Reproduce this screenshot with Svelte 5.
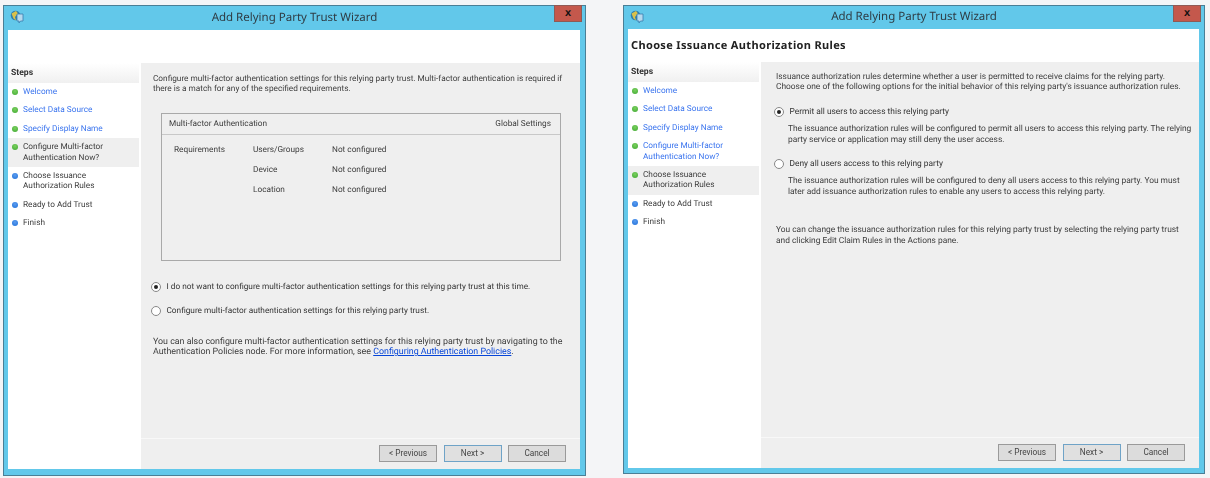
<script>
  const stepsA = [
    { t: ['Welcome'], c: 'g', link: true },
    { t: ['Select Data Source'], c: 'g', link: true },
    { t: ['Specify Display Name'], c: 'g', link: true },
    { t: ['Configure Multi-factor', 'Authentication Now?'], c: 'g', cur: true },
    { t: ['Choose Issuance', 'Authorization Rules'], c: 'b' },
    { t: ['Ready to Add Trust'], c: 'b' },
    { t: ['Finish'], c: 'b' }
  ];
  const stepsB = [
    { t: ['Welcome'], c: 'g', link: true },
    { t: ['Select Data Source'], c: 'g', link: true },
    { t: ['Specify Display Name'], c: 'g', link: true },
    { t: ['Configure Multi-factor', 'Authentication Now?'], c: 'g', link: true },
    { t: ['Choose Issuance', 'Authorization Rules'], c: 'g', cur: true },
    { t: ['Ready to Add Trust'], c: 'b' },
    { t: ['Finish'], c: 'b' }
  ];
  const rows = [
    ['Requirements', 'Users/Groups', 'Not configured'],
    ['', 'Device', 'Not configured'],
    ['', 'Location', 'Not configured']
  ];
</script>

{#snippet titlebar()}
  <div class="titlebar">
    <svg class="appicon" viewBox="0 0 14 14" width="14" height="14">
      <circle cx="5.5" cy="5.5" r="4.8" fill="#2f7fae" />
      <path d="M1.5 3.5 L6 1 L8 3.5 L5 7 L6 10.5 L3.5 8.5 Z" fill="#d8c04a" />
      <path d="M7 4 H13 V11 H10.5 L9 13 V11 H7 Z" fill="#b5d9ee" stroke="#3a7cad" stroke-width="0.8" />
    </svg>
    <span class="wintitle">Add Relying Party Trust Wizard</span>
    <div class="close"><span>x</span></div>
  </div>
{/snippet}

{#snippet stepsPane(steps)}
  <aside class="steps">
    <div class="stepshead">Steps</div>
    <ul>
      {#each steps as s}
        <li class:cur={s.cur}>
          <i class="dot {s.c}"></i>
          <span class:link={s.link}>{#each s.t as line}<span class="line">{line}</span>{/each}</span>
        </li>
      {/each}
    </ul>
  </aside>
{/snippet}

{#snippet footer()}
  <div class="footer">
    <button class="btn">&lt; Previous</button>
    <button class="btn next">Next &gt;</button>
    <button class="btn">Cancel</button>
  </div>
{/snippet}

<div class="page">
  <section class="win one">
    {@render titlebar()}
    <div class="client">
      <header class="head"></header>
      <div class="body">
        {@render stepsPane(stepsA)}
        <main class="main">
          <div class="content">
            <p class="intro">Configure multi-factor authentication settings for this relying party trust. Multi-factor authentication is required if<br />there is a match for any of the specified requirements.</p>
            <div class="mfa">
              <div class="mfahead"><span>Multi-factor Authentication</span><span>Global Settings</span></div>
              <div class="mfagrid">
                {#each rows as r}
                  <span>{r[0]}</span><span>{r[1]}</span><span>{r[2]}</span>
                {/each}
              </div>
            </div>
            <label class="radio first"><i class="rb on"></i>I do not want to configure multi-factor authentication settings for this relying party trust at this time.</label>
            <label class="radio second"><i class="rb"></i>Configure multi-factor authentication settings for this relying party trust.</label>
            <p class="also">You can also configure multi-factor authentication settings for this relying party trust by navigating to the<br />Authentication Policies node. For more information, see <a href="#top">Configuring Authentication Policies</a>.</p>
          </div>
          {@render footer()}
        </main>
      </div>
    </div>
  </section>

  <section class="win two">
    {@render titlebar()}
    <div class="client">
      <header class="head"><h1>Choose Issuance Authorization Rules</h1></header>
      <div class="body">
        {@render stepsPane(stepsB)}
        <main class="main">
          <div class="content">
            <p class="intro">Issuance authorization rules determine whether a user is permitted to receive claims for the relying party.<br />Choose one of the following options for the initial behavior of this relying party's issuance authorization rules.</p>
            <label class="radio p1"><i class="rb on"></i>Permit all users to access this relying party</label>
            <p class="desc">The issuance authorization rules will be configured to permit all users to access this relying party. The relying<br />party service or application may still deny the user access.</p>
            <label class="radio p2"><i class="rb"></i>Deny all users access to this relying party</label>
            <p class="desc">The issuance authorization rules will be configured to deny all users access to this relying party. You must<br />later add issuance authorization rules to enable any users to access this relying party.</p>
            <p class="change">You can change the issuance authorization rules for this relying party trust by selecting the relying party trust<br />and clicking Edit Claim Rules in the Actions pane.</p>
          </div>
          {@render footer()}
        </main>
      </div>
    </div>
  </section>
</div>

<style>
  :global(body) {
    margin: 0;
    background: #f4f5f7;
  }
  .page {
    width: 1210px;
    height: 478px;
    box-sizing: border-box;
    padding: 5px 0 0 3px;
    display: flex;
    align-items: flex-start;
    gap: 37px;
    font-family: Roboto, "Noto Sans", sans-serif;
    font-size: 8.25px;
    line-height: 10.4px;
    color: #3c3c3c;
    text-rendering: geometricPrecision;
    overflow: hidden;
    white-space: nowrap;
    filter: blur(0.35px);
  }
  .win {
    box-sizing: border-box;
    background: #62c8ea;
    border: 1px solid #4a7f96;
    display: flex;
    flex-direction: column;
  }
  .one { width: 583px; height: 471px; }
  .two { width: 582px; height: 469px; }
  .titlebar {
    height: 24px;
    flex: none;
    display: flex;
    align-items: center;
    justify-content: center;
    position: relative;
  }
  .two .titlebar { height: 23px; }
  .appicon { position: absolute; left: 6px; top: 4px; }
  .wintitle { font-size: 11.5px; color: #2f3c44; font-family: "Noto Sans", sans-serif; }
  .close {
    position: absolute;
    right: 3px;
    top: -1px;
    width: 28px;
    height: 17px;
    background: #c4584c;
    border: 1px solid #8f5a55;
    box-sizing: border-box;
    display: flex;
    align-items: center;
    justify-content: center;
    font: bold 11px/1 "Liberation Sans", sans-serif;
    color: #111;
  }
  .client {
    flex: 1;
    margin: 0 5px 6px 4px;
    background: #fff;
    display: flex;
    flex-direction: column;
    min-height: 0;
  }
  .two .client { margin-bottom: 5px; }
  .head {
    height: 33px;
    flex: none;
    box-sizing: border-box;
    padding-top: 2px;
    background: #fff;
    display: flex;
    align-items: center;
  }
  h1 {
    margin: 0 0 0 3px;
    font-size: 11px;
    letter-spacing: 0.35px;
    font-weight: 700;
    color: #222;
    font-family: "Noto Sans", sans-serif;
  }
  .body {
    flex: 1;
    display: flex;
    min-height: 0;
  }
  .steps {
    width: 131px;
    flex: none;
    background: #fff;
  }
  .stepshead {
    height: 20px;
    padding-left: 3px;
    display: flex;
    align-items: center;
    font-weight: 700;
    font-size: 8.6px;
    color: #333;
    background: linear-gradient(#fff, #f0f0f0);
  }
  ul {
    list-style: none;
    margin: 0;
    padding: 0;
  }
  li {
    display: flex;
    gap: 5px;
    padding: 4px 0 4px 4px;
  }
  li.cur { background: #efefef; }
  .line { display: block; }
  .link { color: #3a74ee; }
  .dot {
    width: 6px;
    height: 6px;
    border-radius: 50%;
    margin-top: 2px;
    flex: none;
  }
  .dot.g { background: radial-gradient(circle at 50% 35%, #7ad05e, #3fa832); }
  .dot.b { background: radial-gradient(circle at 50% 35%, #5a9cf0, #1f6fd8); }
  .main {
    flex: 1;
    margin-left: 2px;
    background: #efefef;
    display: flex;
    flex-direction: column;
    min-width: 0;
  }
  .content {
    flex: 1;
    padding: 11px 10px 0 12px;
  }
  .two .content { padding: 10px 10px 0 15px; font-size: 8.38px; }
  p { margin: 0; }
  .mfa {
    margin-top: 18px;
    width: 400px;
    height: 148px;
    box-sizing: border-box;
    border: 1px solid #a9a9a9;
    margin-left: 8px;
  }
  .mfahead {
    height: 21px;
    box-sizing: border-box;
    border-bottom: 1px solid #c8c8c8;
    display: flex;
    align-items: center;
    justify-content: space-between;
    padding: 0 9px 0 7px;
  }
  .mfagrid {
    display: grid;
    grid-template-columns: 79px 79px auto;
    grid-auto-rows: 20px;
    padding: 10px 0 0 12px;
  }
  .radio {
    display: flex;
    align-items: center;
    gap: 5.5px;
    color: #333;
    margin-left: -2px;
  }
  .rb {
    width: 8px;
    height: 8px;
    border: 1px solid #888;
    border-radius: 50%;
    background: #fff;
    flex: none;
    position: relative;
  }
  .rb.on::after {
    content: "";
    position: absolute;
    inset: 2px;
    border-radius: 50%;
    background: #222;
  }
  .first { margin-top: 21px; }
  .second { margin-top: 14px; }
  .also { margin-top: 20px; font-size: 8.85px; }
  a { color: #0645d8; text-decoration: underline; }
  .p1 { margin-top: 14px; }
  .p2 { margin-top: 14px; }
  .desc { margin-top: 7px; margin-left: 12px; }
  .change { margin-top: 28px; }
  .footer {
    height: 31px;
    flex: none;
    box-sizing: border-box;
    border-top: 1px solid #f8f8f8;
    display: flex;
    justify-content: flex-end;
    align-items: center;
    gap: 6.5px;
    padding: 0 14px 1px 0;
  }
  .btn {
    width: 58px;
    height: 17px;
    padding: 0;
    box-sizing: border-box;
    background: #dcdcdc;
    border: 1px solid #9a9a9a;
    font: inherit;
    color: #444;
  }
  .next { border-color: #6fa3c7; background: #e0e0e0; }
</style>
